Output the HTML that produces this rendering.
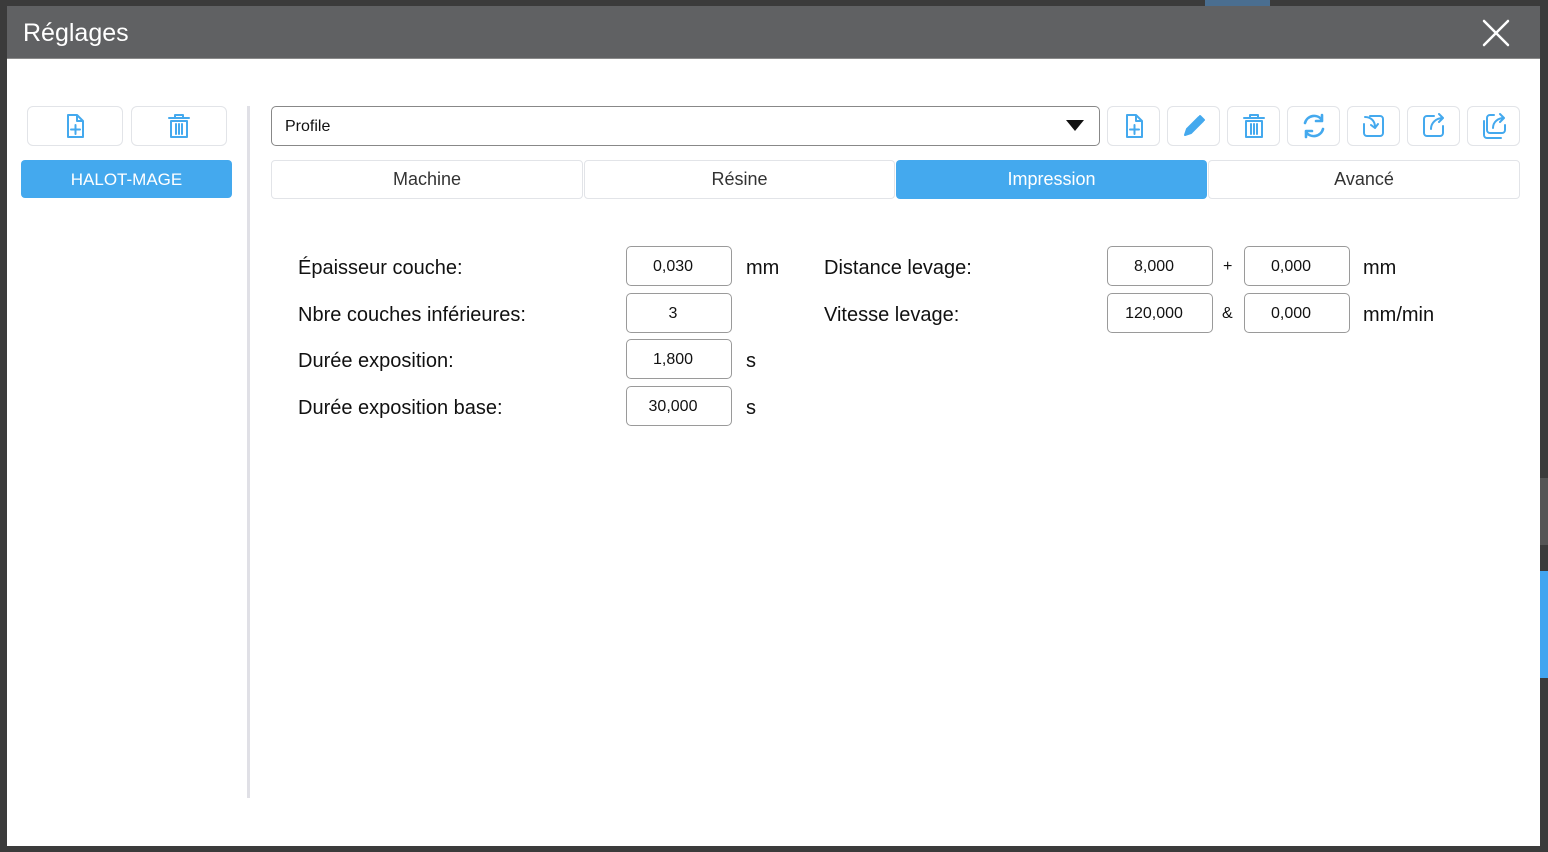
<!DOCTYPE html>
<html><head><meta charset="utf-8"><style>
*{box-sizing:border-box;margin:0;padding:0}
body{width:1548px;height:852px;background:#3b3b3b;position:relative;overflow:hidden;font-family:"Liberation Sans",sans-serif;color:#111}
.a{position:absolute}
.dlg{left:7px;top:6px;width:1533px;height:840px;background:#fff}
.title{left:7px;top:6px;width:1533px;height:53px;background:#606163;color:#fff;font-size:25px;line-height:55px;padding-left:16px;border-bottom:1px solid #8a8a8a}
.btn{border:1px solid #e2e4e8;border-radius:6px;background:#fff;display:flex;align-items:center;justify-content:center}
.blue{background:#44a9ee;color:#fff;border-radius:4px;display:flex;align-items:center;justify-content:center}
.tab{border:1px solid #e2e4e8;border-radius:4px;display:flex;align-items:center;justify-content:center;font-size:18px;color:#333;height:39px;top:160px}
.lbl{font-size:20px;line-height:24px;top:1px}
.in{width:106px;height:40px;border:1px solid #9a9a9a;border-radius:5px;font-size:16px;display:flex;align-items:center;justify-content:center;padding-right:12px;padding-top:2px}
svg{fill:none;stroke:#44a9ee;stroke-width:2;stroke-linecap:round;stroke-linejoin:round}
</style></head><body>
<div class="a" style="left:1205px;top:0;width:65px;height:6px;background:#4a6e90"></div>
<div class="a" style="left:1540px;top:478px;width:8px;height:67px;background:#555"></div>
<div class="a" style="left:1540px;top:571px;width:8px;height:107px;background:#42a5f0"></div>
<div class="a dlg"></div>
<div class="a title">Réglages</div>
<svg class="a" style="left:1482px;top:19px;stroke:#fff;stroke-width:2.5" width="28" height="28"><path d="M2 2L26 26M26 2L2 26"/></svg>

<div class="a btn" style="left:27px;top:106px;width:96px;height:40px"><svg width="24" height="26"><path d="M5 2h9l6 6v16H5z M14 2v6h6 M12.5 12v9 M8 16.5h9"/></svg></div>
<div class="a btn" style="left:131px;top:106px;width:96px;height:40px"><svg width="26" height="26"><path d="M3 5h20 M9 5V2h8v3 M5 8h16v16H5z M10 11v10 M13 11v10 M16 11v10"/></svg></div>
<div class="a blue" style="left:21px;top:160px;width:211px;height:38px;font-size:17px;padding-top:2px">HALOT-MAGE</div>
<div class="a" style="left:247px;top:106px;width:3px;height:692px;background:#e0e0e6"></div>

<div class="a" style="left:271px;top:106px;width:829px;height:40px;border:1px solid #888;border-radius:5px;font-size:16px;line-height:40px;padding-left:13px">Profile</div>
<svg class="a" style="left:1066px;top:119px;stroke:none;fill:#111" width="18" height="12"><path d="M0 1h18L9 12z"/></svg>

<div class="a btn" style="left:1107px;top:106px;width:53px;height:40px"><svg width="24" height="26"><path d="M5 2h9l6 6v16H5z M14 2v6h6 M12.5 12v9 M8 16.5h9"/></svg></div>
<div class="a btn" style="left:1167px;top:106px;width:53px;height:40px"><svg width="26" height="26"><path d="M4 22l2-6L18 4l4 4L10 20z" style="fill:#44a9ee"/><path d="M19 3l4 4" /></svg></div>
<div class="a btn" style="left:1227px;top:106px;width:53px;height:40px"><svg width="26" height="26"><path d="M3 5h20 M9 5V2h8v3 M5 8h16v16H5z M10 11v10 M13 11v10 M16 11v10"/></svg></div>
<div class="a btn" style="left:1287px;top:106px;width:53px;height:40px"><svg width="28" height="28"><path d="M5 11a9.5 9.5 0 0 1 17-3 M23 17a9.5 9.5 0 0 1-17 3 M22 3v6h-6 M6 25v-6h6" style="stroke-width:2.6"/></svg></div>
<div class="a btn" style="left:1347px;top:106px;width:53px;height:40px"><svg width="28" height="28"><path d="M10 4H20a3 3 0 0 1 3 3v14a3 3 0 0 1-3 3H7a3 3 0 0 1-3-3V12 M5 5c6 0 10 4 10 10 M11 13l4 3 3-4"/></svg></div>
<div class="a btn" style="left:1407px;top:106px;width:53px;height:40px"><svg width="28" height="28"><path d="M14 4H7a3 3 0 0 0-3 3v14a3 3 0 0 0 3 3h13a3 3 0 0 0 3-3v-7 M11 17c0-6 5-11 12-11 M19 2l4 4-4 4"/></svg></div>
<div class="a btn" style="left:1467px;top:106px;width:53px;height:40px"><svg width="28" height="28"><path d="M4 9v14a3 3 0 0 0 3 3h14 M14 3h-4a3 3 0 0 0-3 3v12a3 3 0 0 0 3 3h12a3 3 0 0 0 3-3v-5 M13 16c0-6 5-10 11-10 M20 2l4 4-4 4"/></svg></div>

<div class="a tab" style="left:271px;width:312px">Machine</div>
<div class="a tab" style="left:584px;width:311px">Résine</div>
<div class="a tab blue" style="left:896px;width:311px;border:none;color:#fff">Impression</div>
<div class="a tab" style="left:1208px;width:312px">Avancé</div>

<div class="a lbl" style="left:298px;top:256px">Épaisseur couche:</div>
<div class="a lbl" style="left:298px;top:303px">Nbre couches inférieures:</div>
<div class="a lbl" style="left:298px;top:349px">Durée exposition:</div>
<div class="a lbl" style="left:298px;top:396px">Durée exposition base:</div>
<div class="a in" style="left:626px;top:246px">0,030</div>
<div class="a in" style="left:626px;top:293px">3</div>
<div class="a in" style="left:626px;top:339px">1,800</div>
<div class="a in" style="left:626px;top:386px">30,000</div>
<div class="a lbl" style="left:746px;top:256px">mm</div>
<div class="a lbl" style="left:746px;top:349px">s</div>
<div class="a lbl" style="left:746px;top:396px">s</div>

<div class="a lbl" style="left:824px;top:256px">Distance levage:</div>
<div class="a lbl" style="left:824px;top:303px">Vitesse levage:</div>
<div class="a in" style="left:1107px;top:246px">8,000</div>
<div class="a in" style="left:1107px;top:293px">120,000</div>
<div class="a" style="left:1223px;top:258px;font-size:16px">+</div>
<div class="a" style="left:1222px;top:305px;font-size:16px">&amp;</div>
<div class="a in" style="left:1244px;top:246px">0,000</div>
<div class="a in" style="left:1244px;top:293px">0,000</div>
<div class="a lbl" style="left:1363px;top:256px">mm</div>
<div class="a lbl" style="left:1363px;top:303px">mm/min</div>
</body></html>
